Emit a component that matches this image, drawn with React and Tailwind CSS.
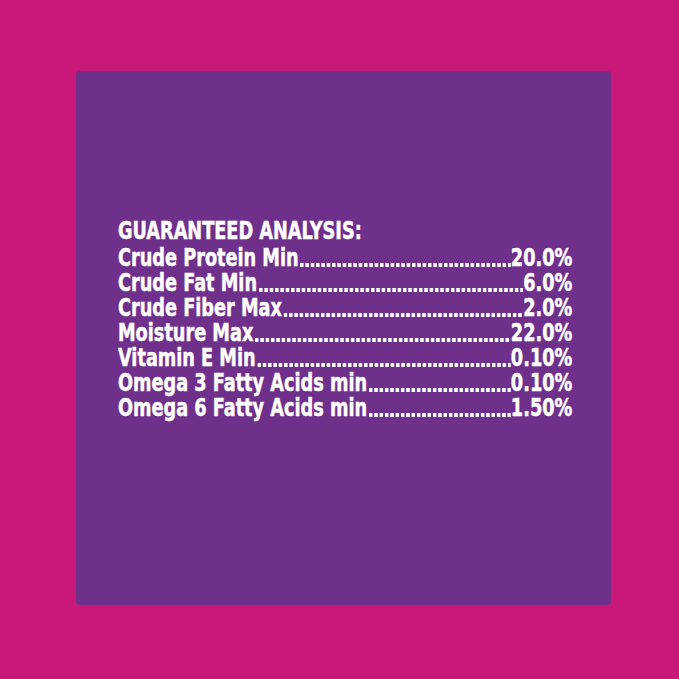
const ROWS = [
  ["Crude Protein Min", "20.0%"],
  ["Crude Fat Min", "6.0%"],
  ["Crude Fiber Max", "2.0%"],
  ["Moisture Max", "22.0%"],
  ["Vitamin E Min", "0.10%"],
  ["Omega 3 Fatty Acids min", "0.10%"],
  ["Omega 6 Fatty Acids min", "1.50%"],
];

function Row({ label, value }) {
  return (
    <div className="flex h-[25px] items-end whitespace-nowrap">
      <span>{label}</span>
      <span className="mb-[4px] ml-[2px] h-[4px] min-w-0 flex-1 bg-[linear-gradient(to_right,white_4px,transparent_4px)] bg-[length:6.5px_4px] bg-repeat-x" />
      <span>{value}</span>
    </div>
  );
}

export default function App() {
  return (
    <div className="flex h-[679px] w-[679px] bg-[#c8197b] pl-[76px] pt-[71px]">
      <div className="flex h-[534px] w-[535px] flex-col rounded-[4px] bg-[#6f308c] pl-[42px] pt-[145px]">
        <div
          className="w-[554px] shrink-0 origin-left scale-x-[0.82] text-[24px] font-bold leading-[25px] text-white [-webkit-text-stroke:0.5px_white]"
          style={{ fontFamily: '"DejaVu Sans Condensed", "Liberation Sans", sans-serif' }}
        >
          <div className="h-[30px] leading-[30px]">GUARANTEED ANALYSIS:</div>
          {ROWS.map(([label, value]) => (
            <Row key={label} label={label} value={value} />
          ))}
        </div>
      </div>
    </div>
  );
}
